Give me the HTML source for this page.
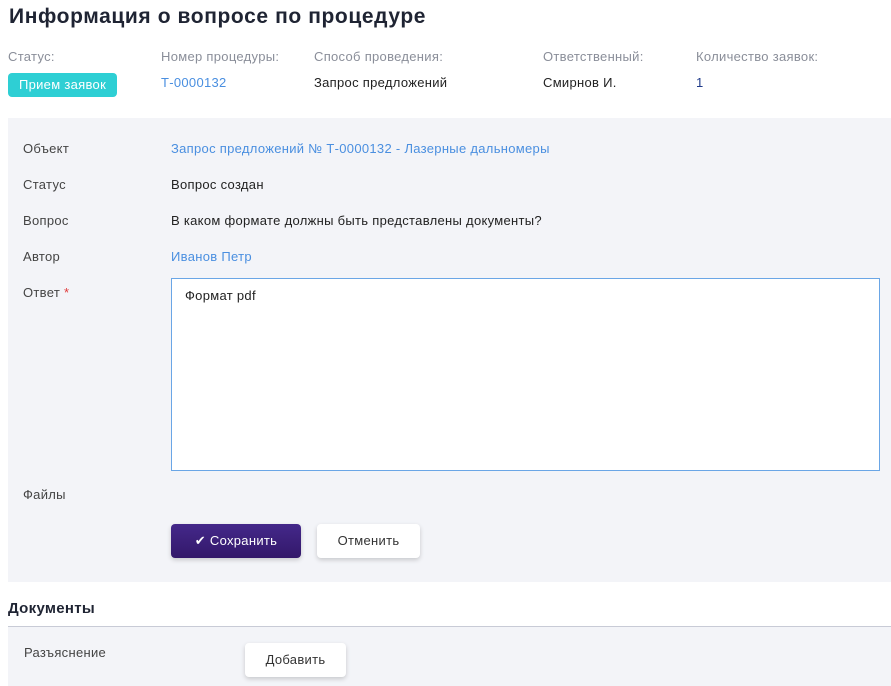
<!DOCTYPE html>
<html><head><meta charset="utf-8"><style>
*{box-sizing:border-box;margin:0;padding:0}
body{width:891px;height:686px;overflow:hidden;background:#fff;font-family:"Liberation Sans","DejaVu Sans",sans-serif;font-size:13px;letter-spacing:0.3px;color:#222;position:relative}
.a{position:absolute;white-space:nowrap}
.g{color:#8a8e99}
.l{color:#4a8fe0}
.btn{position:absolute;background:#fff;border-radius:4px;box-shadow:0 2px 5px rgba(0,0,0,.18);text-align:center;font-size:13px;color:#333}
</style></head><body>
<div class="a" style="left:9px;top:5px;font-size:21px;font-weight:bold;color:#1f2433;letter-spacing:0.6px">Информация о вопросе по процедуре</div>
<div class="a g" style="left:8px;top:49px">Статус:</div>
<div class="a g" style="left:161px;top:49px">Номер процедуры:</div>
<div class="a g" style="left:314px;top:49px">Способ проведения:</div>
<div class="a g" style="left:543px;top:49px">Ответственный:</div>
<div class="a g" style="left:696px;top:49px">Количество заявок:</div>
<div class="a" style="left:8px;top:73px;width:109px;height:24px;background:#2ecfd4;border-radius:4px;color:#fff;text-align:center;line-height:24px">Прием заявок</div>
<div class="a l" style="left:161px;top:75px">Т-0000132</div>
<div class="a" style="left:314px;top:75px">Запрос предложений</div>
<div class="a" style="left:543px;top:75px">Смирнов И.</div>
<div class="a" style="left:696px;top:75px;color:#1f3a8a">1</div>
<div class="a" style="left:8px;top:118px;width:883px;height:464px;background:#f3f4f8"></div>
<div class="a" style="left:23px;top:141px;color:#444">Объект</div>
<div class="a l" style="left:171px;top:141px">Запрос предложений № Т-0000132 - Лазерные дальномеры</div>
<div class="a" style="left:23px;top:177px;color:#444">Статус</div>
<div class="a" style="left:171px;top:177px">Вопрос создан</div>
<div class="a" style="left:23px;top:213px;color:#444">Вопрос</div>
<div class="a" style="left:171px;top:213px">В каком формате должны быть представлены документы?</div>
<div class="a" style="left:23px;top:249px;color:#444">Автор</div>
<div class="a l" style="left:171px;top:249px">Иванов Петр</div>
<div class="a" style="left:23px;top:285px;color:#444">Ответ <span style="color:#e03b3b">*</span></div>
<div class="a" style="left:171px;top:278px;width:709px;height:193px;background:#fff;border:1px solid #6aa6e6;padding:9px 13px">Формат pdf</div>
<div class="a" style="left:23px;top:487px;color:#444">Файлы</div>
<div class="btn" style="left:171px;top:524px;width:130px;height:34px;line-height:34px;background:linear-gradient(#44288a,#33186a);color:#fff">✔ Сохранить</div>
<div class="btn" style="left:317px;top:524px;width:103px;height:34px;line-height:34px">Отменить</div>
<div class="a" style="left:8px;top:600px;font-size:15px;font-weight:bold;color:#1f2433">Документы</div>
<div class="a" style="left:8px;top:626px;width:883px;height:1px;background:#c8cbd6"></div>
<div class="a" style="left:8px;top:627px;width:883px;height:59px;background:#f3f4f8"></div>
<div class="a" style="left:24px;top:645px;color:#444">Разъяснение</div>
<div class="btn" style="left:245px;top:643px;width:101px;height:34px;line-height:34px">Добавить</div>
</body></html>
